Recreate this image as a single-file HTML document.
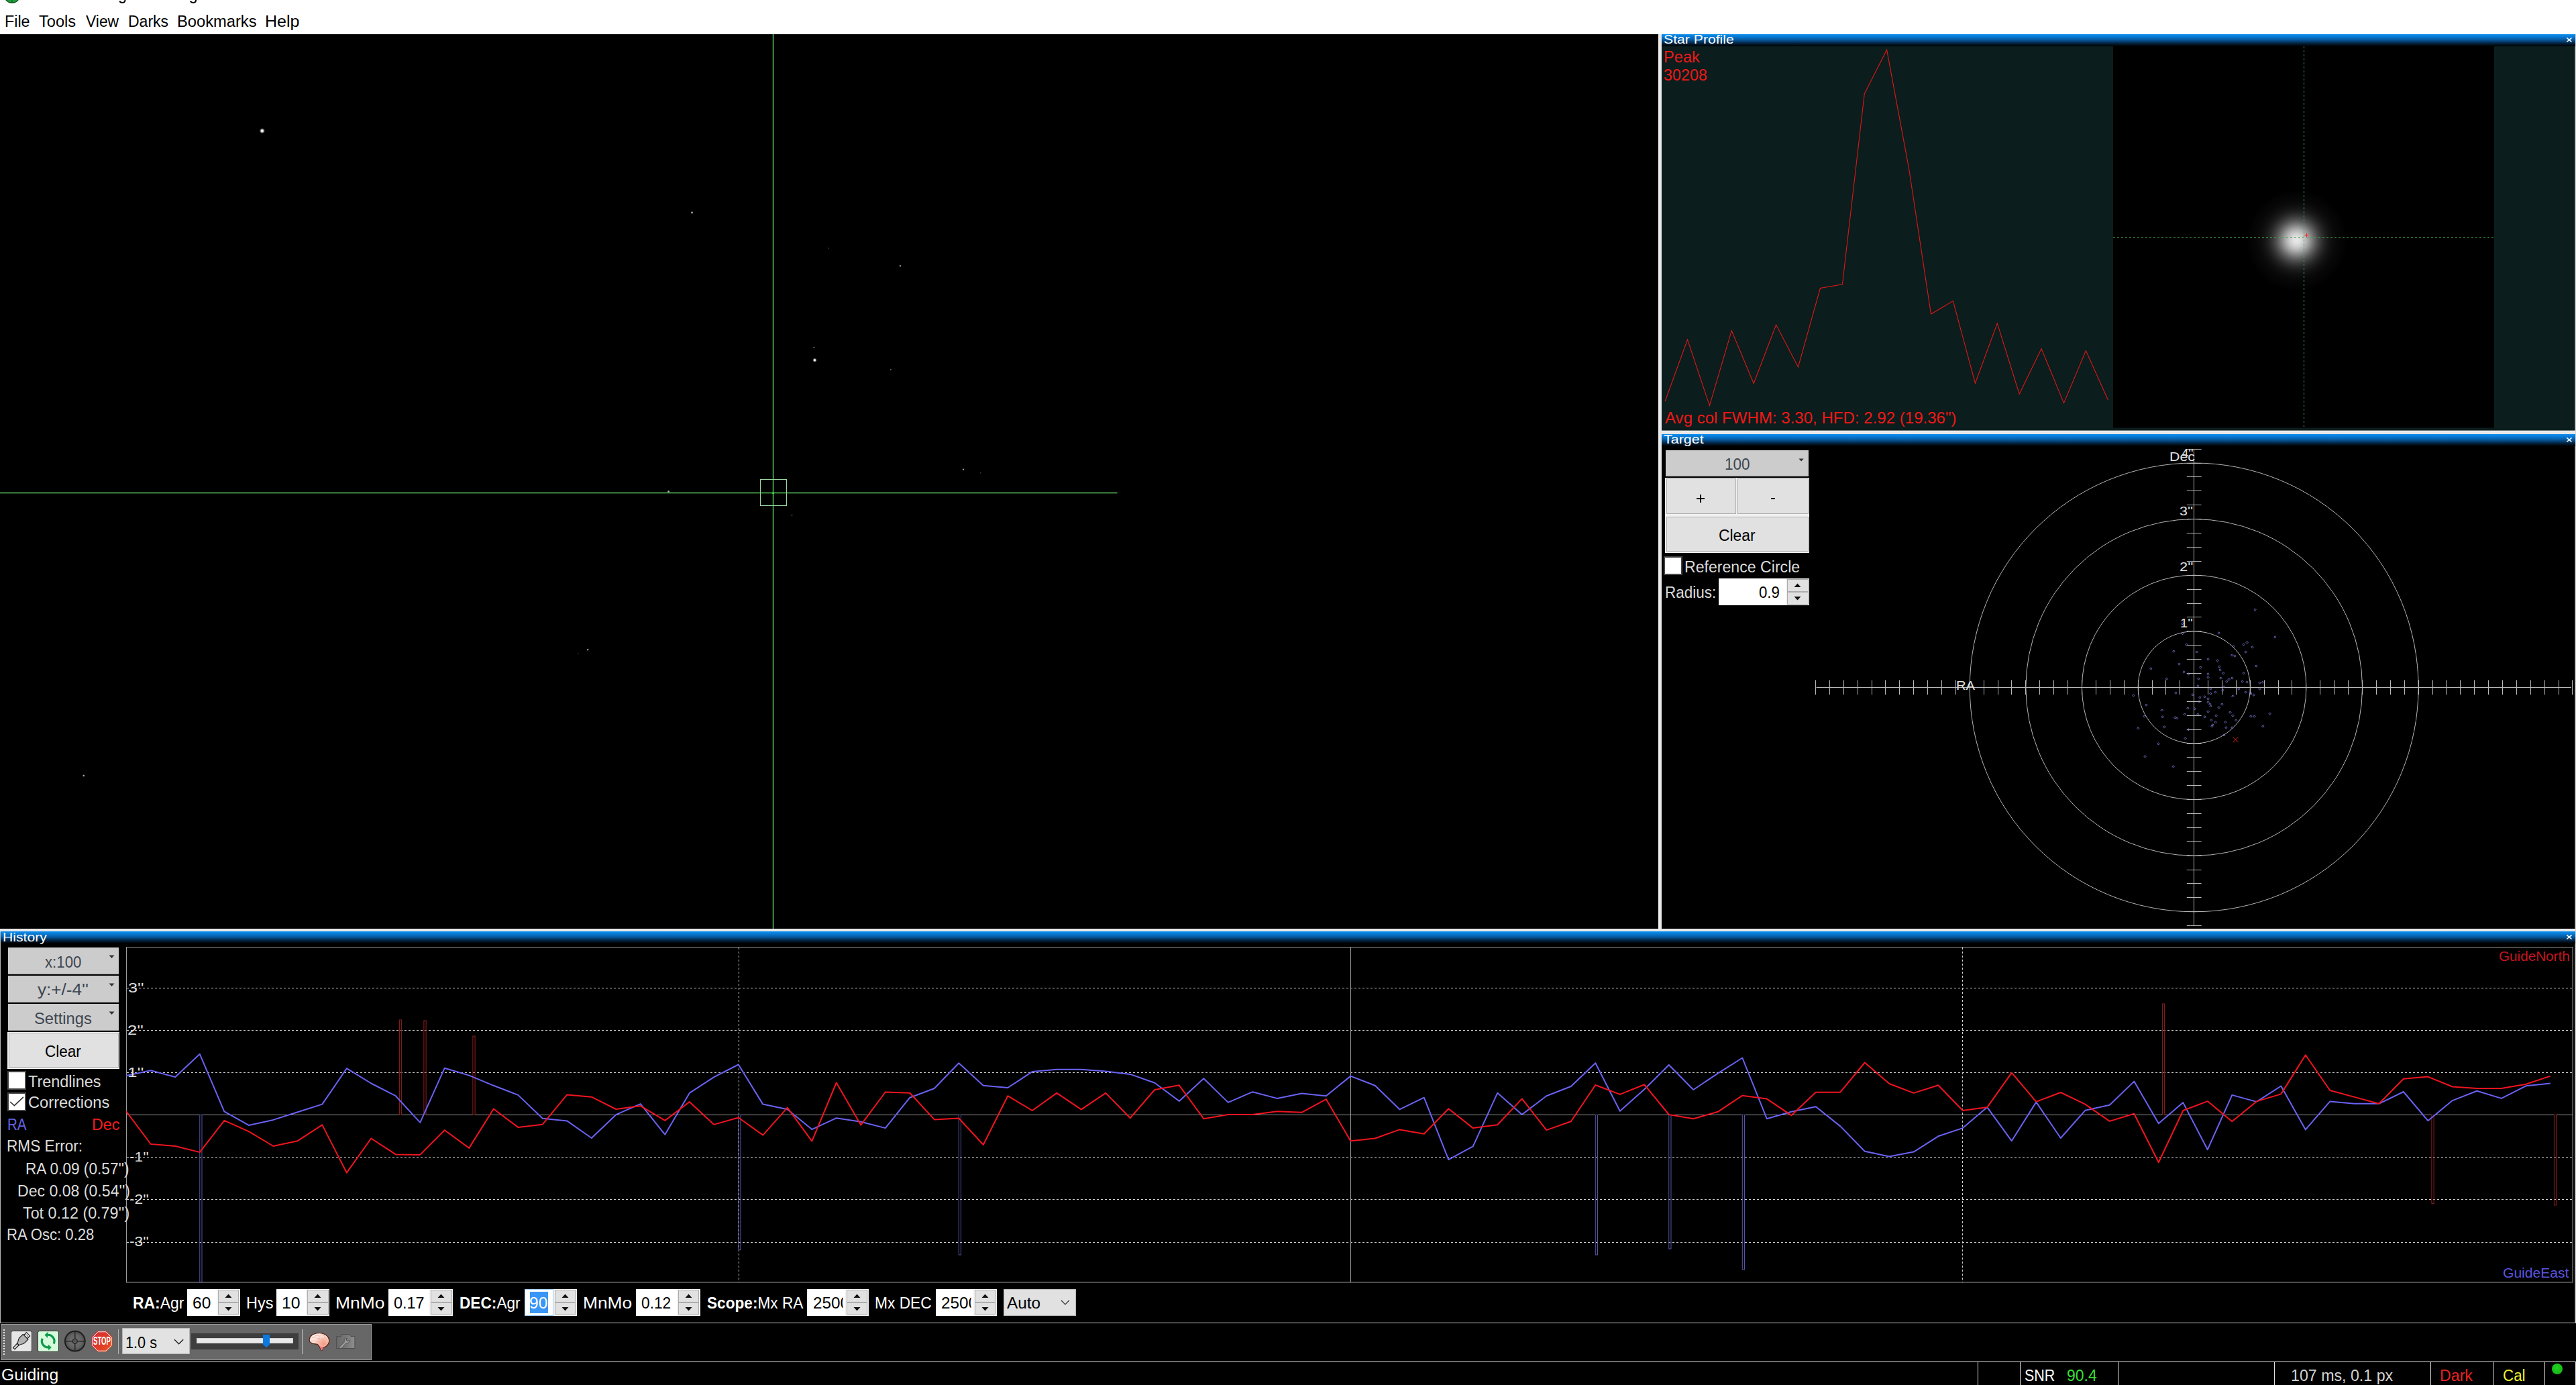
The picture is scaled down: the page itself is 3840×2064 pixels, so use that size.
<!DOCTYPE html>
<html><head><meta charset="utf-8"><title>PHD2 Guiding</title>
<style>
html,body{margin:0;padding:0;background:#fff;}
body{width:3840px;height:2064px;position:relative;overflow:hidden;font-family:"Liberation Sans",sans-serif;}
.a{position:absolute;}
.t{position:absolute;white-space:pre;line-height:1;transform-origin:0 0;}
.cap{position:absolute;height:18px;background:linear-gradient(#0a8ff0 0%,#0878d2 22%,#07569a 48%,#04294a 72%,#010a12 92%,#000 100%);}
.btn{position:absolute;background:#e1e1e1;border:1px solid #adadad;box-sizing:border-box;}
.lp{position:absolute;background:#f0f0f0;}
.dd{position:absolute;background:#cccccc;box-sizing:border-box;border-bottom:1px solid #a2a2a2;}
.sp{position:absolute;background:#fff;box-sizing:border-box;border:1px solid #7a7a7a;}
.sb{position:absolute;background:#e1e1e1;box-sizing:border-box;border:1px solid #adadad;}
.cb{position:absolute;background:#fff;box-sizing:border-box;border:2px solid #444;width:28px;height:28px;}
</style></head><body>

<svg class="a" style="left:0;top:0" width="320" height="8" viewBox="0 0 320 8"><circle cx="18" cy="-7.6" r="11.8" fill="#1fa03c" stroke="#0b4d1a" stroke-width="1.3"/><path d="M18 0v4" stroke="#0b4d1a" stroke-width="1"/><path d="M186.6 -1C186.6 3.4 184.4 3.9 182.6 3.9C180.6 3.9 179 3.2 178.3 1.6" stroke="#000" stroke-width="2" fill="none"/><path d="M292.2 -1C292.2 3.4 290 3.9 288.2 3.9C286.2 3.9 284.6 3.2 283.9 1.6" stroke="#000" stroke-width="2" fill="none"/></svg>
<div class="a" style="left:0;top:51px;width:2472px;height:1333px;background:#000"></div>
<svg class="a" style="left:0;top:0" width="3840" height="2064" viewBox="0 0 3840 2064">
<defs><radialGradient id="sg"><stop offset="0" stop-color="#fff" stop-opacity="1"/><stop offset="0.3" stop-color="#fff" stop-opacity="0.96"/><stop offset="0.55" stop-color="#fff" stop-opacity="0.55"/><stop offset="0.8" stop-color="#fff" stop-opacity="0.13"/><stop offset="1" stop-color="#fff" stop-opacity="0"/></radialGradient><radialGradient id="glow"><stop offset="0.000" stop-color="rgb(232,232,232)"/><stop offset="0.067" stop-color="rgb(225,225,225)"/><stop offset="0.133" stop-color="rgb(206,206,206)"/><stop offset="0.200" stop-color="rgb(179,179,179)"/><stop offset="0.267" stop-color="rgb(146,146,146)"/><stop offset="0.333" stop-color="rgb(113,113,113)"/><stop offset="0.400" stop-color="rgb(83,83,83)"/><stop offset="0.467" stop-color="rgb(59,59,59)"/><stop offset="0.533" stop-color="rgb(40,40,40)"/><stop offset="0.600" stop-color="rgb(26,26,26)"/><stop offset="0.667" stop-color="rgb(17,17,17)"/><stop offset="0.733" stop-color="rgb(11,11,11)"/><stop offset="0.800" stop-color="rgb(7,7,7)"/><stop offset="0.867" stop-color="rgb(5,5,5)"/><stop offset="0.933" stop-color="rgb(3,3,3)"/><stop offset="1.000" stop-color="rgb(0,0,0)"/></radialGradient></defs>
<circle cx="390.8" cy="195.0" r="4.42" fill="url(#sg)" opacity="1.0"/>
<circle cx="1031.5" cy="316.8" r="2.21" fill="url(#sg)" opacity="0.75"/>
<circle cx="1214.5" cy="536.7" r="3.38" fill="url(#sg)" opacity="1.0"/>
<circle cx="1213.4" cy="517.6" r="1.56" fill="url(#sg)" opacity="0.6"/>
<circle cx="1235.5" cy="370" r="1.30" fill="url(#sg)" opacity="0.3"/>
<circle cx="1342" cy="396.2" r="1.95" fill="url(#sg)" opacity="0.65"/>
<circle cx="1327.8" cy="550.8" r="1.69" fill="url(#sg)" opacity="0.4"/>
<circle cx="1436" cy="699.6" r="1.82" fill="url(#sg)" opacity="0.65"/>
<circle cx="1461.8" cy="704.8" r="1.30" fill="url(#sg)" opacity="0.25"/>
<circle cx="996.6" cy="732.5" r="2.21" fill="url(#sg)" opacity="0.75"/>
<circle cx="876.2" cy="968.2" r="1.95" fill="url(#sg)" opacity="0.7"/>
<circle cx="862" cy="974" r="1.30" fill="url(#sg)" opacity="0.2"/>
<circle cx="124.8" cy="1155.9" r="2.08" fill="url(#sg)" opacity="0.7"/>
<circle cx="1180.3" cy="768" r="2.60" fill="url(#sg)" opacity="0.12"/>
<rect x="1151.8" y="51" width="1.5" height="1333" fill="#56c45c"/>
<rect x="0" y="733.8" width="1665.5" height="1.5" fill="#56c45c"/>
<rect x="1133.5" y="714.5" width="39" height="39" fill="none" stroke="#9ad8a0" stroke-width="1"/>
<circle cx="1152.6" cy="734.8" r="1.6" fill="#2fe83c"/>
<rect x="2477" y="68" width="1361.6" height="573.6" fill="#0b1d1c"/>
<rect x="3150" y="69" width="568" height="568.5" fill="#000"/>
<circle cx="3423.5" cy="358" r="75" fill="url(#glow)"/>
<line x1="3434.5" y1="69" x2="3434.5" y2="637" stroke="#3fa64f" stroke-width="1" stroke-dasharray="3 3"/>
<line x1="3150" y1="353.5" x2="3718" y2="353.5" stroke="#3fa64f" stroke-width="1" stroke-dasharray="3 3"/>
<path d="M3435.5 350.3h6M3438.5 347.3v6" stroke="#ff2020" stroke-width="1"/>
<polyline fill="none" stroke="#e01818" stroke-width="1.1" points="2482.1,598.0 2515.5,506.1 2548.4,604.5 2581.3,492.7 2614.2,571.5 2647.6,484.0 2680.5,546.9 2713.4,429.5 2746.4,423.8 2779.3,139.7 2812.6,74.3 2845.6,251.4 2878.5,468.0 2911.4,448.5 2944.4,571.1 2977.3,481.9 3010.2,587.2 3043.1,519.6 3076.5,600.6 3109.4,522.6 3142.3,595.8"/>
<rect x="2477" y="664" width="1361.6" height="720" fill="#000"/>
<circle cx="3270.7" cy="1024.4" r="83.60" fill="none" stroke="#b4b4b4" stroke-width="1"/>
<circle cx="3270.7" cy="1024.4" r="167.20" fill="none" stroke="#b4b4b4" stroke-width="1"/>
<circle cx="3270.7" cy="1024.4" r="250.80" fill="none" stroke="#b4b4b4" stroke-width="1"/>
<circle cx="3270.7" cy="1024.4" r="334.40" fill="none" stroke="#b4b4b4" stroke-width="1"/>
<path d="M2707.5 1024.5H3833M3270.5 669V1380M2706.50 1013.5v21.8M2727.50 1013.5v21.8M2748.50 1013.5v21.8M2769.50 1013.5v21.8M2790.50 1013.5v21.8M2810.50 1013.5v21.8M2831.50 1013.5v21.8M2852.50 1013.5v21.8M2873.50 1013.5v21.8M2894.50 1013.5v21.8M2915.50 1013.5v21.8M2936.50 1013.5v21.8M2957.50 1013.5v21.8M2978.50 1013.5v21.8M2998.50 1013.5v21.8M3019.50 1013.5v21.8M3040.50 1013.5v21.8M3061.50 1013.5v21.8M3082.50 1013.5v21.8M3103.50 1013.5v21.8M3124.50 1013.5v21.8M3145.50 1013.5v21.8M3166.50 1013.5v21.8M3187.50 1013.5v21.8M3208.50 1013.5v21.8M3228.50 1013.5v21.8M3249.50 1013.5v21.8M3291.50 1013.5v21.8M3312.50 1013.5v21.8M3333.50 1013.5v21.8M3354.50 1013.5v21.8M3375.50 1013.5v21.8M3396.50 1013.5v21.8M3416.50 1013.5v21.8M3437.50 1013.5v21.8M3458.50 1013.5v21.8M3479.50 1013.5v21.8M3500.50 1013.5v21.8M3521.50 1013.5v21.8M3542.50 1013.5v21.8M3563.50 1013.5v21.8M3584.50 1013.5v21.8M3605.50 1013.5v21.8M3626.50 1013.5v21.8M3646.50 1013.5v21.8M3667.50 1013.5v21.8M3688.50 1013.5v21.8M3709.50 1013.5v21.8M3730.50 1013.5v21.8M3751.50 1013.5v21.8M3772.50 1013.5v21.8M3793.50 1013.5v21.8M3814.50 1013.5v21.8M3834.50 1013.5v21.8M3259.8 669.50h21.8M3259.8 690.50h21.8M3259.8 710.50h21.8M3259.8 731.50h21.8M3259.8 752.50h21.8M3259.8 773.50h21.8M3259.8 794.50h21.8M3259.8 815.50h21.8M3259.8 836.50h21.8M3259.8 857.50h21.8M3259.8 878.50h21.8M3259.8 899.50h21.8M3259.8 919.50h21.8M3259.8 940.50h21.8M3259.8 961.50h21.8M3259.8 982.50h21.8M3259.8 1003.50h21.8M3259.8 1045.50h21.8M3259.8 1066.50h21.8M3259.8 1087.50h21.8M3259.8 1108.50h21.8M3259.8 1128.50h21.8M3259.8 1149.50h21.8M3259.8 1170.50h21.8M3259.8 1191.50h21.8M3259.8 1212.50h21.8M3259.8 1233.50h21.8M3259.8 1254.50h21.8M3259.8 1275.50h21.8M3259.8 1296.50h21.8M3259.8 1316.50h21.8M3259.8 1337.50h21.8M3259.8 1358.50h21.8M3259.8 1379.50h21.8" stroke="#b8b8b8" stroke-width="1" fill="none"/>
<path d="M3361.5 907.0l1.6 1.6l-1.6 1.6l-1.6 -1.6zM3391.4 947.8l1.6 1.6l-1.6 1.6l-1.6 -1.6zM3307.5 941.8l1.6 1.6l-1.6 1.6l-1.6 -1.6zM3253.5 942.6l1.6 1.6l-1.6 1.6l-1.6 -1.6zM3253.1 927.8l1.6 1.6l-1.6 1.6l-1.6 -1.6zM3349.6 955.9l1.6 1.6l-1.6 1.6l-1.6 -1.6zM3344.5 959.0l1.6 1.6l-1.6 1.6l-1.6 -1.6zM3329.4 961.8l1.6 1.6l-1.6 1.6l-1.6 -1.6zM3357.5 962.8l1.6 1.6l-1.6 1.6l-1.6 -1.6zM3259.4 959.0l1.6 1.6l-1.6 1.6l-1.6 -1.6zM3240.4 968.9l1.6 1.6l-1.6 1.6l-1.6 -1.6zM3274.6 969.9l1.6 1.6l-1.6 1.6l-1.6 -1.6zM3347.5 969.9l1.6 1.6l-1.6 1.6l-1.6 -1.6zM3327.3 974.9l1.6 1.6l-1.6 1.6l-1.6 -1.6zM3331.4 976.0l1.6 1.6l-1.6 1.6l-1.6 -1.6zM3291.5 980.8l1.6 1.6l-1.6 1.6l-1.6 -1.6zM3305.5 982.8l1.6 1.6l-1.6 1.6l-1.6 -1.6zM3248.5 987.9l1.6 1.6l-1.6 1.6l-1.6 -1.6zM3308.3 991.9l1.6 1.6l-1.6 1.6l-1.6 -1.6zM3280.4 992.9l1.6 1.6l-1.6 1.6l-1.6 -1.6zM3206.4 994.8l1.6 1.6l-1.6 1.6l-1.6 -1.6zM3363.3 990.9l1.6 1.6l-1.6 1.6l-1.6 -1.6zM3309.5 996.8l1.6 1.6l-1.6 1.6l-1.6 -1.6zM3255.5 999.8l1.6 1.6l-1.6 1.6l-1.6 -1.6zM3262.4 1002.8l1.6 1.6l-1.6 1.6l-1.6 -1.6zM3291.5 1002.8l1.6 1.6l-1.6 1.6l-1.6 -1.6zM3314.4 1001.8l1.6 1.6l-1.6 1.6l-1.6 -1.6zM3344.5 1001.8l1.6 1.6l-1.6 1.6l-1.6 -1.6zM3291.5 1007.9l1.6 1.6l-1.6 1.6l-1.6 -1.6zM3229.7 1009.9l1.6 1.6l-1.6 1.6l-1.6 -1.6zM3277.4 1009.9l1.6 1.6l-1.6 1.6l-1.6 -1.6zM3310.3 1008.9l1.6 1.6l-1.6 1.6l-1.6 -1.6zM3322.5 1010.9l1.6 1.6l-1.6 1.6l-1.6 -1.6zM3327.3 1008.9l1.6 1.6l-1.6 1.6l-1.6 -1.6zM3319.4 1014.0l1.6 1.6l-1.6 1.6l-1.6 -1.6zM3342.5 1014.0l1.6 1.6l-1.6 1.6l-1.6 -1.6zM3349.6 1015.0l1.6 1.6l-1.6 1.6l-1.6 -1.6zM3368.4 1016.0l1.6 1.6l-1.6 1.6l-1.6 -1.6zM3372.8 1015.0l1.6 1.6l-1.6 1.6l-1.6 -1.6zM3276.4 1020.8l1.6 1.6l-1.6 1.6l-1.6 -1.6zM3315.4 1021.9l1.6 1.6l-1.6 1.6l-1.6 -1.6zM3295.4 1024.9l1.6 1.6l-1.6 1.6l-1.6 -1.6zM3337.4 1024.9l1.6 1.6l-1.6 1.6l-1.6 -1.6zM3368.4 1024.9l1.6 1.6l-1.6 1.6l-1.6 -1.6zM3313.4 1026.9l1.6 1.6l-1.6 1.6l-1.6 -1.6zM3302.5 1029.9l1.6 1.6l-1.6 1.6l-1.6 -1.6zM3295.4 1032.0l1.6 1.6l-1.6 1.6l-1.6 -1.6zM3347.5 1029.9l1.6 1.6l-1.6 1.6l-1.6 -1.6zM3354.4 1031.0l1.6 1.6l-1.6 1.6l-1.6 -1.6zM3355.4 1032.0l1.6 1.6l-1.6 1.6l-1.6 -1.6zM3359.5 1034.0l1.6 1.6l-1.6 1.6l-1.6 -1.6zM3243.4 1031.0l1.6 1.6l-1.6 1.6l-1.6 -1.6zM3268.5 1033.8l1.6 1.6l-1.6 1.6l-1.6 -1.6zM3180.3 1034.8l1.6 1.6l-1.6 1.6l-1.6 -1.6zM3328.3 1035.8l1.6 1.6l-1.6 1.6l-1.6 -1.6zM3279.4 1037.8l1.6 1.6l-1.6 1.6l-1.6 -1.6zM3286.5 1036.8l1.6 1.6l-1.6 1.6l-1.6 -1.6zM3291.5 1039.8l1.6 1.6l-1.6 1.6l-1.6 -1.6zM3278.4 1043.9l1.6 1.6l-1.6 1.6l-1.6 -1.6zM3291.5 1044.9l1.6 1.6l-1.6 1.6l-1.6 -1.6zM3294.4 1047.9l1.6 1.6l-1.6 1.6l-1.6 -1.6zM3295.4 1050.8l1.6 1.6l-1.6 1.6l-1.6 -1.6zM3312.4 1047.9l1.6 1.6l-1.6 1.6l-1.6 -1.6zM3307.5 1052.8l1.6 1.6l-1.6 1.6l-1.6 -1.6zM3199.5 1048.9l1.6 1.6l-1.6 1.6l-1.6 -1.6zM3261.4 1053.8l1.6 1.6l-1.6 1.6l-1.6 -1.6zM3271.5 1054.8l1.6 1.6l-1.6 1.6l-1.6 -1.6zM3222.6 1056.8l1.6 1.6l-1.6 1.6l-1.6 -1.6zM3291.5 1058.9l1.6 1.6l-1.6 1.6l-1.6 -1.6zM3324.5 1059.9l1.6 1.6l-1.6 1.6l-1.6 -1.6zM3256.6 1062.9l1.6 1.6l-1.6 1.6l-1.6 -1.6zM3276.4 1062.9l1.6 1.6l-1.6 1.6l-1.6 -1.6zM3303.5 1064.9l1.6 1.6l-1.6 1.6l-1.6 -1.6zM3328.3 1064.9l1.6 1.6l-1.6 1.6l-1.6 -1.6zM3286.5 1066.7l1.6 1.6l-1.6 1.6l-1.6 -1.6zM3223.6 1066.7l1.6 1.6l-1.6 1.6l-1.6 -1.6zM3242.4 1067.8l1.6 1.6l-1.6 1.6l-1.6 -1.6zM3245.4 1068.8l1.6 1.6l-1.6 1.6l-1.6 -1.6zM3196.5 1065.9l1.6 1.6l-1.6 1.6l-1.6 -1.6zM3355.4 1065.9l1.6 1.6l-1.6 1.6l-1.6 -1.6zM3360.5 1065.9l1.6 1.6l-1.6 1.6l-1.6 -1.6zM3383.5 1061.9l1.6 1.6l-1.6 1.6l-1.6 -1.6zM3296.4 1071.8l1.6 1.6l-1.6 1.6l-1.6 -1.6zM3333.4 1071.8l1.6 1.6l-1.6 1.6l-1.6 -1.6zM3302.5 1074.8l1.6 1.6l-1.6 1.6l-1.6 -1.6zM3317.4 1074.8l1.6 1.6l-1.6 1.6l-1.6 -1.6zM3298.4 1078.7l1.6 1.6l-1.6 1.6l-1.6 -1.6zM3297.4 1080.7l1.6 1.6l-1.6 1.6l-1.6 -1.6zM3373.4 1080.7l1.6 1.6l-1.6 1.6l-1.6 -1.6zM3226.4 1081.7l1.6 1.6l-1.6 1.6l-1.6 -1.6zM3318.4 1082.7l1.6 1.6l-1.6 1.6l-1.6 -1.6zM3327.3 1082.7l1.6 1.6l-1.6 1.6l-1.6 -1.6zM3187.4 1083.7l1.6 1.6l-1.6 1.6l-1.6 -1.6zM3262.4 1085.7l1.6 1.6l-1.6 1.6l-1.6 -1.6zM3315.4 1093.8l1.6 1.6l-1.6 1.6l-1.6 -1.6zM3257.6 1098.9l1.6 1.6l-1.6 1.6l-1.6 -1.6zM3217.5 1106.8l1.6 1.6l-1.6 1.6l-1.6 -1.6zM3197.5 1125.8l1.6 1.6l-1.6 1.6l-1.6 -1.6zM3239.6 1140.7l1.6 1.6l-1.6 1.6l-1.6 -1.6z" stroke="#8080e0" stroke-width="0.9" fill="none"/>
<path d="M3328.6 1098.3l8 8M3336.6 1098.3l-8 8" stroke="#e02020" stroke-width="1"/>
<rect x="0" y="1406" width="3838.6" height="565" fill="#000"/>
<rect x="188.5" y="1411.5" width="3646.5" height="499.5" fill="none" stroke="#9a9a9a" stroke-width="1"/>
<line x1="189" y1="1472.5" x2="3835" y2="1472.5" stroke="#d0d0d0" stroke-width="1" stroke-dasharray="3 3"/>
<line x1="189" y1="1535.5" x2="3835" y2="1535.5" stroke="#d0d0d0" stroke-width="1" stroke-dasharray="3 3"/>
<line x1="189" y1="1598.5" x2="3835" y2="1598.5" stroke="#d0d0d0" stroke-width="1" stroke-dasharray="3 3"/>
<line x1="189" y1="1724.5" x2="3835" y2="1724.5" stroke="#d0d0d0" stroke-width="1" stroke-dasharray="3 3"/>
<line x1="189" y1="1787.5" x2="3835" y2="1787.5" stroke="#d0d0d0" stroke-width="1" stroke-dasharray="3 3"/>
<line x1="189" y1="1851.5" x2="3835" y2="1851.5" stroke="#d0d0d0" stroke-width="1" stroke-dasharray="3 3"/>
<line x1="189" y1="1661.5" x2="3835" y2="1661.5" stroke="#9c9c9c" stroke-width="1"/>
<line x1="1101.5" y1="1412" x2="1101.5" y2="1911" stroke="#d0d0d0" stroke-width="1" stroke-dasharray="3 3"/>
<line x1="2013.5" y1="1412" x2="2013.5" y2="1911" stroke="#9c9c9c" stroke-width="1"/>
<line x1="2925.5" y1="1412" x2="2925.5" y2="1911" stroke="#d0d0d0" stroke-width="1" stroke-dasharray="3 3"/>
<rect x="297.8" y="1661.5" width="3.2" height="249.0" fill="none" stroke="#5656a8" stroke-width="1"/>
<rect x="1100.8" y="1661.5" width="3.2" height="201.0" fill="none" stroke="#5656a8" stroke-width="1"/>
<rect x="1429.3" y="1661.5" width="3.2" height="208.5" fill="none" stroke="#5656a8" stroke-width="1"/>
<rect x="2378.3" y="1661.5" width="3.2" height="208.5" fill="none" stroke="#5656a8" stroke-width="1"/>
<rect x="2487.8" y="1661.5" width="3.2" height="199.5" fill="none" stroke="#5656a8" stroke-width="1"/>
<rect x="2597.3" y="1661.5" width="3.2" height="230.5" fill="none" stroke="#5656a8" stroke-width="1"/>
<rect x="595.4" y="1520.0" width="3.2" height="141.5" fill="none" stroke="#8c2020" stroke-width="1"/>
<rect x="631.9" y="1521.0" width="3.2" height="140.5" fill="none" stroke="#8c2020" stroke-width="1"/>
<rect x="704.9" y="1544.0" width="3.2" height="117.5" fill="none" stroke="#8c2020" stroke-width="1"/>
<rect x="3223.4" y="1496.0" width="3.2" height="165.5" fill="none" stroke="#8c2020" stroke-width="1"/>
<rect x="3624.9" y="1661.5" width="3.2" height="131.9" fill="none" stroke="#8c2020" stroke-width="1"/>
<rect x="3807.4" y="1661.5" width="3.2" height="134.5" fill="none" stroke="#8c2020" stroke-width="1"/>
<polyline fill="none" stroke="#6a62f2" stroke-width="2" stroke-linejoin="round" points="188.3,1603.1 224.8,1595.2 261.3,1605.1 297.8,1570.8 334.3,1656.3 370.8,1676.9 407.3,1668.9 443.8,1657.3 480.3,1645.6 516.8,1592.2 553.3,1614.5 589.8,1633.2 626.3,1672.9 662.8,1591.7 699.3,1602.6 735.8,1617.8 772.3,1631.9 808.8,1666.7 845.3,1670.4 881.8,1696.0 918.3,1661.2 954.8,1645.1 991.3,1690.8 1027.8,1628.9 1064.3,1605.1 1100.8,1586.5 1137.3,1645.6 1173.8,1653.3 1210.3,1683.1 1246.8,1666.2 1283.3,1671.7 1319.8,1681.1 1356.3,1635.7 1392.8,1622.0 1429.3,1584.2 1465.8,1617.8 1502.3,1621.0 1538.8,1597.1 1575.3,1593.7 1611.8,1593.7 1648.3,1596.6 1684.8,1600.9 1721.3,1613.8 1757.8,1640.9 1794.3,1607.3 1830.8,1642.9 1867.3,1627.2 1903.8,1636.9 1940.3,1629.4 1976.8,1633.2 2013.3,1603.6 2049.8,1617.8 2086.3,1653.3 2122.8,1635.7 2159.3,1728.1 2195.8,1708.4 2232.3,1628.7 2268.8,1661.0 2305.3,1633.2 2341.8,1619.0 2378.3,1584.2 2414.8,1655.8 2451.3,1623.2 2487.8,1587.0 2524.3,1624.0 2560.8,1599.6 2597.3,1576.5 2633.8,1667.2 2670.3,1656.8 2706.8,1649.3 2743.3,1678.4 2779.8,1715.7 2816.3,1723.4 2852.8,1716.6 2889.3,1693.3 2925.8,1681.1 2962.3,1650.1 2998.8,1700.3 3035.3,1642.4 3071.8,1696.0 3108.3,1654.8 3144.8,1646.8 3181.3,1611.6 3217.8,1674.2 3254.3,1643.1 3290.8,1713.2 3327.3,1631.9 3363.8,1641.9 3400.3,1618.5 3436.8,1683.4 3473.3,1641.4 3509.8,1644.8 3546.3,1644.8 3582.8,1627.0 3619.3,1670.2 3655.8,1640.1 3692.3,1625.7 3728.8,1636.9 3765.3,1618.3 3801.8,1614.5"/>
<polyline fill="none" stroke="#f01420" stroke-width="2" stroke-linejoin="round" points="188.3,1656.3 224.8,1705.0 261.3,1708.0 297.8,1717.1 334.3,1669.9 370.8,1686.1 407.3,1708.0 443.8,1700.2 480.3,1676.4 516.8,1747.7 553.3,1696.5 589.8,1720.4 626.3,1720.9 662.8,1684.3 699.3,1710.9 735.8,1652.5 772.3,1679.9 808.8,1675.7 845.3,1631.4 881.8,1634.7 918.3,1653.0 954.8,1648.1 991.3,1669.9 1027.8,1642.1 1064.3,1675.9 1100.8,1665.5 1137.3,1691.6 1173.8,1650.6 1210.3,1700.7 1246.8,1613.5 1283.3,1676.6 1319.8,1627.5 1356.3,1628.7 1392.8,1668.4 1429.3,1666.5 1465.8,1706.0 1502.3,1633.2 1538.8,1655.0 1575.3,1628.9 1611.8,1653.3 1648.3,1628.9 1684.8,1666.2 1721.3,1624.0 1757.8,1617.3 1794.3,1667.2 1830.8,1661.0 1867.3,1661.0 1903.8,1656.3 1940.3,1657.8 1976.8,1638.1 2013.3,1700.3 2049.8,1696.5 2086.3,1683.4 2122.8,1689.8 2159.3,1652.3 2195.8,1681.1 2232.3,1676.2 2268.8,1637.4 2305.3,1684.1 2341.8,1671.2 2378.3,1617.0 2414.8,1630.9 2451.3,1616.3 2487.8,1661.0 2524.3,1667.2 2560.8,1656.8 2597.3,1632.7 2633.8,1637.6 2670.3,1662.2 2706.8,1627.7 2743.3,1627.7 2779.8,1583.5 2816.3,1615.0 2852.8,1628.9 2889.3,1617.3 2925.8,1655.0 2962.3,1650.1 2998.8,1598.6 3035.3,1641.9 3071.8,1628.0 3108.3,1645.6 3144.8,1670.9 3181.3,1659.8 3217.8,1732.3 3254.3,1655.0 3290.8,1641.1 3327.3,1671.2 3363.8,1641.4 3400.3,1630.4 3436.8,1572.3 3473.3,1625.0 3509.8,1634.9 3546.3,1644.8 3582.8,1607.8 3619.3,1604.6 3655.8,1619.5 3692.3,1622.0 3728.8,1622.0 3765.3,1615.8 3801.8,1603.6"/>
</svg>
<div class="a" style="left:2472px;top:51px;width:5px;height:1333px;background:linear-gradient(90deg,#f2f2f2,#e2e2e6)"></div>
<div class="a" style="left:2477px;top:641.6px;width:1363px;height:6px;background:linear-gradient(#ececec,#e4e2e2)"></div>
<div class="a" style="left:0;top:1383.6px;width:3840px;height:5.2px;background:linear-gradient(#eaeaea,#e2e2e4)"></div>
<div class="a" style="left:3838.6px;top:51px;width:1.4px;height:1921px;background:#d4d4d4"></div>
<div class="a" style="left:0;top:1388.5px;width:1px;height:583px;background:#b4b4b4"></div>
<div class="cap" style="left:2477px;top:51px;width:1361.6px;height:17.6px"></div>
<svg class="a" style="left:3825.2px;top:55px" width="10" height="9" viewBox="0 0 10 9"><path d="M1.3 1.3l7.2 6.2M8.5 1.3l-7.2 6.2" stroke="#fff" stroke-width="1.6" fill="none"/></svg>
<div class="cap" style="left:2477px;top:647.1px;width:1361.6px;height:17.6px"></div>
<svg class="a" style="left:3825.2px;top:651.4px" width="10" height="9" viewBox="0 0 10 9"><path d="M1.3 1.3l7.2 6.2M8.5 1.3l-7.2 6.2" stroke="#fff" stroke-width="1.6" fill="none"/></svg>
<div class="cap" style="left:1px;top:1388.3px;width:3837.6px;height:18px"></div>
<svg class="a" style="left:3825.4px;top:1392.2px" width="10" height="9" viewBox="0 0 10 9"><path d="M1.3 1.3l7.2 6.2M8.5 1.3l-7.2 6.2" stroke="#fff" stroke-width="1.6" fill="none"/></svg>
<div class="dd" style="left:2482.7px;top:670.7px;width:213.8px;height:39.6px"></div>
<svg class="a" style="left:2681.3px;top:682.6px" width="9" height="6"><path d="M0.4 0.4h7.4l-3.7 4.2z" fill="#333"/></svg>
<div class="lp" style="left:2482.3px;top:711.6px;width:214.7px;height:112.4px"></div>
<div class="btn" style="left:2483.6px;top:713.1px;width:104px;height:53.1px"></div>
<div class="btn" style="left:2590.3px;top:713.1px;width:105.5px;height:53.1px"></div>
<div class="btn" style="left:2483.6px;top:770px;width:212.2px;height:52.4px"></div>
<svg class="a" style="left:2527.5px;top:736px" width="14" height="14"><path d="M7 1v12M1 7h12" stroke="#000" stroke-width="1.9"/></svg>
<div class="a" style="left:2639.6px;top:742.3px;width:6.6px;height:1.5px;background:#111"></div>
<div class="cb" style="left:2480px;top:829px"></div>
<div class="a" style="left:2562.2px;top:862.2px;width:134.8px;height:39.7px;background:#f2f2f2"></div>
<div class="a" style="left:2562.2px;top:862.2px;width:100.2px;height:39.7px;background:#fff"></div>
<div class="sb" style="left:2664px;top:863.4px;width:31.8px;height:18.6px"></div>
<div class="sb" style="left:2664px;top:882.4px;width:31.8px;height:18.6px"></div>
<svg class="a" style="left:2674.4px;top:868.8px" width="11" height="26"><path d="M0.5 6l5-5.5l5 5.5zM0.5 20l5 5.5l5-5.5z" fill="#111"/></svg>
<div class="dd" style="left:11.6px;top:1411.9px;width:165.6px;height:39.9px"></div>
<svg class="a" style="left:161.5px;top:1422.9px" width="10" height="6"><path d="M0.5 0.5h8l-4 4.5z" fill="#333"/></svg>
<div class="dd" style="left:11.6px;top:1454.2px;width:165.6px;height:39.9px"></div>
<svg class="a" style="left:161.5px;top:1465.2px" width="10" height="6"><path d="M0.5 0.5h8l-4 4.5z" fill="#333"/></svg>
<div class="dd" style="left:11.6px;top:1496px;width:165.6px;height:39.9px"></div>
<svg class="a" style="left:161.5px;top:1507px" width="10" height="6"><path d="M0.5 0.5h8l-4 4.5z" fill="#333"/></svg>
<div class="lp" style="left:11.3px;top:1537.7px;width:166.8px;height:55px"></div><div class="btn" style="left:12.6px;top:1539px;width:164.2px;height:52.4px"></div>
<div class="cb" style="left:11px;top:1596px"></div>
<div class="cb" style="left:11px;top:1628px"></div>
<svg class="a" style="left:11px;top:1628px" width="28" height="28"><path d="M4.1 14l6.3 5.6l13.5-12.7" stroke="#333" stroke-width="1.6" fill="none"/></svg>
<div class="a" style="left:279.0px;top:1921px;width:78.9px;height:39.5px;background:#f2f2f2"></div>
<div class="a" style="left:279.0px;top:1921px;width:44.2px;height:39.5px;background:#fff;box-sizing:border-box;"></div>
<div class="sb" style="left:324.8px;top:1922.2px;width:31.6px;height:18.9px"></div>
<div class="sb" style="left:324.8px;top:1941.1px;width:31.6px;height:18.4px"></div>
<svg class="a" style="left:335.1px;top:1928px" width="11" height="26"><path d="M0.5 6l5-5.5l5 5.5zM0.5 20l5 5.5l5-5.5z" fill="#111"/></svg>
<div class="a" style="left:412.2px;top:1921px;width:78.9px;height:39.5px;background:#f2f2f2"></div>
<div class="a" style="left:412.2px;top:1921px;width:44.2px;height:39.5px;background:#fff;box-sizing:border-box;"></div>
<div class="sb" style="left:458.0px;top:1922.2px;width:31.6px;height:18.9px"></div>
<div class="sb" style="left:458.0px;top:1941.1px;width:31.6px;height:18.4px"></div>
<svg class="a" style="left:468.3px;top:1928px" width="11" height="26"><path d="M0.5 6l5-5.5l5 5.5zM0.5 20l5 5.5l5-5.5z" fill="#111"/></svg>
<div class="a" style="left:578.5px;top:1921px;width:96.6px;height:39.5px;background:#f2f2f2"></div>
<div class="a" style="left:578.5px;top:1921px;width:61.9px;height:39.5px;background:#fff;box-sizing:border-box;"></div>
<div class="sb" style="left:642.0px;top:1922.2px;width:31.6px;height:18.9px"></div>
<div class="sb" style="left:642.0px;top:1941.1px;width:31.6px;height:18.4px"></div>
<svg class="a" style="left:652.3px;top:1928px" width="11" height="26"><path d="M0.5 6l5-5.5l5 5.5zM0.5 20l5 5.5l5-5.5z" fill="#111"/></svg>
<div class="a" style="left:781.8px;top:1921px;width:77.8px;height:39.5px;background:#f2f2f2"></div>
<div class="a" style="left:781.8px;top:1921px;width:43.1px;height:39.5px;background:#fff;box-sizing:border-box;border:1.4px solid #9ccaf2;"></div>
<div class="sb" style="left:826.5px;top:1922.2px;width:31.6px;height:18.9px"></div>
<div class="sb" style="left:826.5px;top:1941.1px;width:31.6px;height:18.4px"></div>
<svg class="a" style="left:836.8px;top:1928px" width="11" height="26"><path d="M0.5 6l5-5.5l5 5.5zM0.5 20l5 5.5l5-5.5z" fill="#111"/></svg>
<div class="a" style="left:789.6px;top:1924.8px;width:27px;height:32.6px;background:#3a96f6"></div>
<div class="a" style="left:947.7px;top:1921px;width:95.9px;height:39.5px;background:#f2f2f2"></div>
<div class="a" style="left:947.7px;top:1921px;width:61.2px;height:39.5px;background:#fff;box-sizing:border-box;"></div>
<div class="sb" style="left:1010.5px;top:1922.2px;width:31.6px;height:18.9px"></div>
<div class="sb" style="left:1010.5px;top:1941.1px;width:31.6px;height:18.4px"></div>
<svg class="a" style="left:1020.8px;top:1928px" width="11" height="26"><path d="M0.5 6l5-5.5l5 5.5zM0.5 20l5 5.5l5-5.5z" fill="#111"/></svg>
<div class="a" style="left:1203.4px;top:1921px;width:91.4px;height:39.5px;background:#f2f2f2"></div>
<div class="a" style="left:1203.4px;top:1921px;width:56.7px;height:39.5px;background:#fff;box-sizing:border-box;"></div>
<div class="sb" style="left:1261.7px;top:1922.2px;width:31.6px;height:18.9px"></div>
<div class="sb" style="left:1261.7px;top:1941.1px;width:31.6px;height:18.4px"></div>
<svg class="a" style="left:1272.0px;top:1928px" width="11" height="26"><path d="M0.5 6l5-5.5l5 5.5zM0.5 20l5 5.5l5-5.5z" fill="#111"/></svg>
<div class="a" style="left:1394.5px;top:1921px;width:91.3px;height:39.5px;background:#f2f2f2"></div>
<div class="a" style="left:1394.5px;top:1921px;width:56.6px;height:39.5px;background:#fff;box-sizing:border-box;"></div>
<div class="sb" style="left:1452.7px;top:1922.2px;width:31.6px;height:18.9px"></div>
<div class="sb" style="left:1452.7px;top:1941.1px;width:31.6px;height:18.4px"></div>
<svg class="a" style="left:1463.0px;top:1928px" width="11" height="26"><path d="M0.5 6l5-5.5l5 5.5zM0.5 20l5 5.5l5-5.5z" fill="#111"/></svg>
<div class="btn" style="left:1496px;top:1921.2px;width:108px;height:39.5px;box-shadow:none;border-color:#b6b6b6"></div>
<svg class="a" style="left:1581.2px;top:1937.2px" width="14" height="9"><path d="M1 1l5.9 5.9l5.9-5.9" stroke="#333" stroke-width="1.3" fill="none"/></svg>
<div class="a" style="left:0;top:1971px;width:3839px;height:1.2px;background:#c8c8c8"></div>
<div class="a" style="left:0;top:1972.2px;width:3840px;height:57px;background:#000"></div>
<div class="a" style="left:0;top:2029px;width:3840px;height:1.2px;background:#e8e8e8"></div>
<div class="a" style="left:0;top:2030.2px;width:3840px;height:34px;background:#000"></div>
<div class="a" style="left:1px;top:1972.6px;width:553.4px;height:54px;background:#676767;border:1px solid #a0a0a0;box-sizing:border-box"></div>
<div class="a" style="left:5px;top:1981px;width:2px;height:38px;background:repeating-linear-gradient(#e8e8e8 0 2px,transparent 2px 4px)"></div>
<div class="a" style="left:16.2px;top:1983.2px;width:31.6px;height:31.4px;background:#e6e6e6;border:1px solid #2c2c2c;border-radius:3px;box-sizing:border-box"></div>
<svg class="a" style="left:16.3px;top:1983.3px" width="32" height="32" viewBox="0 0 32 32"><g transform="translate(15.3 16) rotate(45)" stroke="#222" stroke-width="1.2" stroke-linejoin="round"><rect x="-3.7" y="-15.2" width="7.4" height="5.6" fill="#fafafa"/><path d="M-3.7 -12.6h7.4" fill="none" stroke-width="0.9"/><path d="M-5.4 -9.6h10.8v7.2c0 4-3.4 5.4-3.6 8.8h-3.6c-0.2-3.4-3.6-4.8-3.6-8.8z" fill="#b2b2b2"/><rect x="-1.8" y="6.4" width="3.6" height="8.6" fill="#d2d2d2"/></g></svg>
<div class="a" style="left:56.3px;top:1983.2px;width:31.6px;height:31.4px;background:#d6fbdb;border:1px solid #2c2c2c;border-radius:3px;box-sizing:border-box"></div>
<svg class="a" style="left:56.4px;top:1983.3px" width="32" height="32" viewBox="0 0 32 32"><g fill="none" stroke="#0d9a4e" stroke-width="3.2"><path d="M14.1 6.4A9.3 9.3 0 0 1 24.1 19.5"/><path d="M17.3 24.8A9.3 9.3 0 0 1 7.3 11.7"/></g><path d="M10.4 6.4L15.5 1.8L15 11z" fill="#0d9a4e"/><path d="M20.8 25.1L15.7 20.5L16.3 29.6z" fill="#0d9a4e"/></svg>
<svg class="a" style="left:95px;top:1982px" width="34" height="34" viewBox="0 0 34 34"><defs><radialGradient id="cg" cx="0.5" cy="0.5" r="0.5"><stop offset="0" stop-color="#747474"/><stop offset="0.7" stop-color="#626262"/><stop offset="1" stop-color="#484848"/></radialGradient></defs><circle cx="16.8" cy="16.7" r="14.9" fill="url(#cg)" stroke="#1c1c1c" stroke-width="1.9"/><path d="M2.5 16.7h28.6M16.8 2.4v28.6" stroke="#262626" stroke-width="1.5"/><circle cx="16.8" cy="16.7" r="3.3" fill="#6a6a6a" stroke="#222" stroke-width="1.4"/><path d="M15.3 16.7h3M16.8 15.2v3" stroke="#333" stroke-width="0.8"/></svg>
<svg class="a" style="left:135.2px;top:1982px" width="34" height="34" viewBox="0 0 34 34"><defs><linearGradient id="rg" x1="0" y1="0" x2="1" y2="1"><stop offset="0" stop-color="#d42a34"/><stop offset="0.55" stop-color="#de3a2a"/><stop offset="1" stop-color="#ea5a1e"/></linearGradient></defs><polygon points="32.40,23.38 23.38,32.40 10.62,32.40 1.60,23.38 1.60,10.62 10.62,1.60 23.38,1.60 32.40,10.62" fill="url(#rg)"/><polygon points="31.20,22.88 22.88,31.20 11.12,31.20 2.80,22.88 2.80,11.12 11.12,2.80 22.88,2.80 31.20,11.12" fill="none" stroke="#fff" stroke-width="0.9"/><text x="17" y="21.2" font-family="Liberation Sans,sans-serif" font-weight="bold" font-size="13" fill="#fff" text-anchor="middle" textLength="26" lengthAdjust="spacingAndGlyphs" transform="translate(0 -6.6) scale(1 1.33)">STOP</text></svg>
<div class="a" style="left:176px;top:1980.6px;width:1.3px;height:37.4px;background:#b4b4b4"></div>
<div class="a" style="left:182px;top:1979px;width:101px;height:39.4px;background:#e2e2e2;border:1px solid #b4b4b4;box-sizing:border-box"></div>
<svg class="a" style="left:258.6px;top:1995px" width="16" height="10"><path d="M1 1.2l6.6 6.6l6.6-6.6" stroke="#222" stroke-width="1.4" fill="none"/></svg>
<div class="a" style="left:284.8px;top:1987px;width:160.6px;height:23.8px;background:#3e3e3e"></div>
<div class="a" style="left:292.7px;top:1993.8px;width:144.6px;height:8.6px;background:#e9e9e9;border:1px solid #d0d0d0;box-sizing:border-box"></div>
<svg class="a" style="left:391.6px;top:1988.6px" width="10" height="20"><path d="M0 0h10v14.6l-5 4.6l-5-4.6z" fill="#0a7ade"/></svg>
<div class="a" style="left:449.8px;top:1980.6px;width:1.3px;height:37.4px;background:#c4c4c4"></div>
<svg class="a" style="left:460px;top:1985.6px" width="32" height="28" viewBox="0 0 32 28"><defs><radialGradient id="bg1" cx="0.72" cy="0.62" r="0.5"><stop offset="0" stop-color="#f39a7e"/><stop offset="0.5" stop-color="#f7bcaa"/><stop offset="1" stop-color="#fce4dc"/></radialGradient></defs><path d="M1.2 10.1C1.6 7.6 2.4 6 3.7 5C5 3.4 6.5 2.5 8.3 2C10.5 1.1 12.8 0.75 15.3 0.75C18 0.7 20.6 1.1 22.9 2C25 2.8 26.8 4 28 5.5C29.6 7 30.6 9 30.7 11.1C30.9 12.8 30.6 14.3 30 15.6C29.3 17.3 28.3 18.7 27 19.7C25.9 20.6 24.7 21.3 23.4 21.7L20.9 23.2L20.4 26.2L18.4 26C17.6 23.6 16.6 21.4 15.3 19.7C14.6 18.6 13.8 17.7 12.8 17.2C11.4 16.8 9.8 16.9 8.3 16.7C6.5 16.5 4.9 16 3.7 15.1C2.7 14.5 1.9 13.7 1.5 12.6C1.2 11.8 1.1 11 1.2 10.1Z" fill="url(#bg1)" stroke="#5c1c12" stroke-width="1.2" stroke-linejoin="round"/><path d="M16 19.5c2 1.4 4.6 1.6 7 1.2l-2 2.3l-0.5 3l-2-0.2c-0.6-2.4-1.4-4.6-2.5-6.3z" fill="#ee7e84"/><path d="M5 8c2-2.400 4.500-2 5.500 0M10 4.500c2.500-1.500 5.500-1 6.500 1M17 3.500c3-1 6 0 7 2M23 7c2.500 0 4.500 2 4.500 4.500M4 12c2.500 1 4.500 0 5.500-2M10.500 13c2.500 2 5.500 1 7-1M18 9c1.500 2 4 2.500 6 1M19 15c2 1.500 5 1.500 7-0.500M12 8.500c1.500 1 3.500 1 5-0.500" fill="none" stroke="#f0a898" stroke-width="0.9"/><path d="M4.500 6.500c1.500-1.800 3.500-2.600 5.500-2.400M12 2.800c2-0.800 4.500-0.900 6.500-0.400M6 10.500c1.200-0.800 2.600-0.800 3.600 0" fill="none" stroke="#fff6f2" stroke-width="1"/></svg>
<svg class="a" style="left:500.8px;top:1987.8px" width="29" height="23" viewBox="0 0 29 23"><defs><linearGradient id="cam" x1="0" y1="0" x2="1" y2="0"><stop offset="0" stop-color="#6a6a6a"/><stop offset="0.45" stop-color="#747474"/><stop offset="1" stop-color="#8e8e8e"/></linearGradient></defs><path d="M0.7 3.600h6l2-3.100h11.200l2 3.100h6v17.900h-27.200z" fill="url(#cam)" stroke="#4e4e4e" stroke-width="1" stroke-linejoin="round"/><path d="M3.200 21.300l9.200-9.400c-1.100-2.700 0.700-5.600 3.800-5.500l-1.300 2.700l2.500 1.900l2.600-1.700c0.500 3-2.300 5.300-5.100 4.300l-6.600 7.700z" fill="#9c9c9c" stroke="#4a4a4a" stroke-width="0.9" stroke-linejoin="round"/></svg>
<div class="a" style="left:2947.9px;top:2030px;width:1.3px;height:34px;background:#e0e0e0"></div>
<div class="a" style="left:3011.1px;top:2030px;width:1.3px;height:34px;background:#e0e0e0"></div>
<div class="a" style="left:3157.0px;top:2030px;width:1.3px;height:34px;background:#e0e0e0"></div>
<div class="a" style="left:3390.2000000000003px;top:2030px;width:1.3px;height:34px;background:#e0e0e0"></div>
<div class="a" style="left:3623.0px;top:2030px;width:1.3px;height:34px;background:#e0e0e0"></div>
<div class="a" style="left:3715.8px;top:2030px;width:1.3px;height:34px;background:#e0e0e0"></div>
<div class="a" style="left:3792.9px;top:2030px;width:1.3px;height:34px;background:#e0e0e0"></div>
<div class="a" style="left:3838.6px;top:2030px;width:1.3px;height:34px;background:#e0e0e0"></div>
<div class="a" style="left:3803.8px;top:2031.7px;width:16.4px;height:16.4px;border-radius:50%;background:radial-gradient(circle at 45% 40%,#22d022,#10b410)"></div>
<div class="t" id="m0" style="left:6.58px;top:21.28px;font-size:23.3px;color:#000;transform:scaleX(1.0006);">File</div>
<div class="t" id="m1" style="left:57.63px;top:21.28px;font-size:23.3px;color:#000;transform:scaleX(1.0131);">Tools</div>
<div class="t" id="m2" style="left:127.60px;top:21.28px;font-size:23.3px;color:#000;transform:scaleX(0.9808);">View</div>
<div class="t" id="m3" style="left:191.20px;top:21.28px;font-size:23.3px;color:#000;transform:scaleX(0.9881);">Darks</div>
<div class="t" id="m4" style="left:263.65px;top:21.28px;font-size:23.3px;color:#000;transform:scaleX(1.0177);">Bookmarks</div>
<div class="t" id="m5" style="left:395.04px;top:21.28px;font-size:23.3px;color:#000;transform:scaleX(1.0763);">Help</div>
<div class="t" id="c1" style="left:2480.24px;top:50.49px;font-size:18.8px;color:#fff;transform:scaleX(1.1283);">Star Profile</div>
<div class="t" id="c2" style="left:2479.96px;top:646.49px;font-size:18.8px;color:#fff;transform:scaleX(1.1438);">Target</div>
<div class="t" id="c3" style="left:3.65px;top:1387.59px;font-size:18.8px;color:#fff;transform:scaleX(1.1258);">History</div>
<div class="t" id="p1" style="left:2479.95px;top:74.16px;font-size:23.2px;color:#f01818;transform:scaleX(1.0189);">Peak</div>
<div class="t" id="p2" style="left:2480.27px;top:100.56px;font-size:23.2px;color:#f01818;transform:scaleX(1.0072);">30208</div>
<div class="t" id="p3" style="left:2481.80px;top:612.06px;font-size:23.2px;color:#f01818;transform:scaleX(1.0373);">Avg col FWHM: 3.30, HFD: 2.92 (19.36&quot;)</div>
<div class="t" id="t100" style="left:2570.99px;top:681.48px;font-size:23.3px;color:#3e4650;transform:scaleX(0.9691);">100</div>
<div class="t" id="tclear" style="left:2561.53px;top:786.88px;font-size:23.3px;color:#000;transform:scaleX(0.9785);">Clear</div>
<div class="t" id="tref" style="left:2511.19px;top:833.68px;font-size:23.3px;color:#dcdcdc;transform:scaleX(0.9921);">Reference Circle</div>
<div class="t" id="trad" style="left:2481.84px;top:871.58px;font-size:23.3px;color:#dcdcdc;transform:scaleX(0.9643);">Radius:</div>
<div class="t" id="t09" style="left:2622.31px;top:871.58px;font-size:23.3px;color:#000;transform:scaleX(0.9538);">0.9</div>
<div class="t" id="ldec" style="left:3234.33px;top:670.82px;font-size:19px;color:#e0e0e0;transform:scaleX(1.1248);">Dec</div>
<div class="t" id="l4" style="left:3252.11px;top:665.82px;font-size:19px;color:#e0e0e0;transform:scaleX(0.9777);">4''</div>
<div class="t" id="l3" style="left:3249.13px;top:751.62px;font-size:19px;color:#e0e0e0;transform:scaleX(1.1307);">3''</div>
<div class="t" id="l2" style="left:3248.77px;top:835.42px;font-size:19px;color:#e0e0e0;transform:scaleX(1.1518);">2''</div>
<div class="t" id="l1" style="left:3250.24px;top:919.42px;font-size:19px;color:#e0e0e0;transform:scaleX(1.0651);">1''</div>
<div class="t" id="lra" style="left:2916.42px;top:1012.02px;font-size:19px;color:#e0e0e0;transform:scaleX(1.0639);">RA</div>
<div class="t" id="hx" style="left:67.20px;top:1422.68px;font-size:23.3px;color:#3e4650;transform:scaleX(0.9536);">x:100</div>
<div class="t" id="hy" style="left:56.30px;top:1464.48px;font-size:23.3px;color:#3e4650;transform:scaleX(1.1208);">y:+/-4''</div>
<div class="t" id="hs" style="left:50.86px;top:1506.58px;font-size:23.3px;color:#3e4650;transform:scaleX(1.0201);">Settings</div>
<div class="t" id="hclear" style="left:66.94px;top:1555.88px;font-size:23.3px;color:#000;transform:scaleX(0.9675);">Clear</div>
<div class="t" id="htr" style="left:42.43px;top:1600.58px;font-size:23.3px;color:#dcdcdc;transform:scaleX(1.0053);">Trendlines</div>
<div class="t" id="hco" style="left:41.69px;top:1632.38px;font-size:23.3px;color:#dcdcdc;transform:scaleX(1.0178);">Corrections</div>
<div class="t" id="hra" style="left:10.90px;top:1664.58px;font-size:23.3px;color:#6464e6;transform:scaleX(0.8806);">RA</div>
<div class="t" id="hdec" style="left:136.68px;top:1664.58px;font-size:23.3px;color:#f41c1c;transform:scaleX(1.0013);">Dec</div>
<div class="t" id="hrms" style="left:10.23px;top:1697.48px;font-size:23.3px;color:#dcdcdc;transform:scaleX(0.9709);">RMS Error:</div>
<div class="t" id="hr1" style="left:37.53px;top:1730.98px;font-size:23.3px;color:#dcdcdc;transform:scaleX(0.9720);">RA 0.09 (0.57'')</div>
<div class="t" id="hr2" style="left:25.50px;top:1763.98px;font-size:23.3px;color:#dcdcdc;transform:scaleX(0.9912);">Dec 0.08 (0.54'')</div>
<div class="t" id="hr3" style="left:34.34px;top:1796.78px;font-size:23.3px;color:#dcdcdc;transform:scaleX(1.0002);">Tot 0.12 (0.79'')</div>
<div class="t" id="hosc" style="left:10.27px;top:1829.08px;font-size:23.3px;color:#dcdcdc;transform:scaleX(0.9500);">RA Osc: 0.28</div>
<div class="t" id="g3" style="left:190.72px;top:1462.88px;font-size:19.5px;color:#dedede;transform:scaleX(1.2874);">3''</div>
<div class="t" id="g2" style="left:190.30px;top:1525.95px;font-size:19.5px;color:#dedede;transform:scaleX(1.3113);">2''</div>
<div class="t" id="g1" style="left:189.87px;top:1589.02px;font-size:19.5px;color:#dedede;transform:scaleX(1.3361);">1''</div>
<div class="t" id="gm1" style="left:192.99px;top:1715.16px;font-size:19.5px;color:#dedede;transform:scaleX(1.1641);">-1''</div>
<div class="t" id="gm2" style="left:192.99px;top:1778.23px;font-size:19.5px;color:#dedede;transform:scaleX(1.1641);">-2''</div>
<div class="t" id="gm3" style="left:192.99px;top:1841.30px;font-size:19.5px;color:#dedede;transform:scaleX(1.1641);">-3''</div>
<div class="t" id="gn" style="left:3724.83px;top:1415.25px;font-size:20.5px;color:#c81420;transform:scaleX(1.0086);">GuideNorth</div>
<div class="t" id="ge" style="left:3731.31px;top:1886.95px;font-size:20.5px;color:#5c54e0;transform:scaleX(1.0281);">GuideEast</div>
<div class="t" id="b1" style="left:197.57px;top:1930.78px;font-size:23.3px;color:#fff;transform:scaleX(0.9842);"><b>RA:</b>Agr</div>
<div class="t" id="b2" style="left:366.97px;top:1930.78px;font-size:23.3px;color:#fff;transform:scaleX(1.0059);">Hys</div>
<div class="t" id="b3" style="left:499.94px;top:1930.78px;font-size:23.3px;color:#fff;transform:scaleX(1.1328);">MnMo</div>
<div class="t" id="b4" style="left:684.68px;top:1930.78px;font-size:23.3px;color:#fff;transform:scaleX(0.9723);"><b>DEC:</b>Agr</div>
<div class="t" id="b5" style="left:868.64px;top:1930.78px;font-size:23.3px;color:#fff;transform:scaleX(1.1312);">MnMo</div>
<div class="t" id="b6" style="left:1054.05px;top:1930.78px;font-size:23.3px;color:#fff;transform:scaleX(0.9720);"><b>Scope:</b>Mx RA</div>
<div class="t" id="b7" style="left:1304.02px;top:1930.78px;font-size:23.3px;color:#fff;transform:scaleX(0.9774);">Mx DEC</div>
<div class="t" id="s1" style="left:287.05px;top:1930.78px;font-size:23.3px;color:#000;transform:scaleX(1.0518);">60</div>
<div class="t" id="s2" style="left:419.75px;top:1930.78px;font-size:23.3px;color:#000;transform:scaleX(1.0636);">10</div>
<div class="t" id="s3" style="left:586.67px;top:1930.78px;font-size:23.3px;color:#000;transform:scaleX(1.0051);">0.17</div>
<div class="t" id="s4" style="left:789.35px;top:1930.78px;font-size:23.3px;color:#fff;transform:scaleX(1.0518);">90</div>
<div class="t" id="s5" style="left:955.99px;top:1930.78px;font-size:23.3px;color:#000;transform:scaleX(0.9754);">0.12</div>
<div class="t" id="s6" style="left:1212.26px;top:1930.78px;font-size:23.3px;color:#000;transform:scaleX(1.0406);clip-path:inset(0 8.9px 0 0);">2500</div>
<div class="t" id="s7" style="left:1403.36px;top:1930.78px;font-size:23.3px;color:#000;transform:scaleX(1.0406);clip-path:inset(0 9.0px 0 0);">2500</div>
<div class="t" id="bauto" style="left:1500.60px;top:1930.78px;font-size:23.3px;color:#000;transform:scaleX(1.0450);">Auto</div>
<div class="t" id="tb1" style="left:186.64px;top:1989.98px;font-size:23.3px;color:#000;transform:scaleX(0.9311);">1.0 s</div>
<div class="t" id="st0" style="left:2.24px;top:2037.88px;font-size:23.3px;color:#fff;transform:scaleX(1.0602);">Guiding</div>
<div class="t" id="st1" style="left:3017.93px;top:2039.18px;font-size:23.3px;color:#fff;transform:scaleX(0.9190);">SNR</div>
<div class="t" id="st2" style="left:3081.42px;top:2039.18px;font-size:23.3px;color:#38e038;transform:scaleX(0.9845);">90.4</div>
<div class="t" id="st3" style="left:3414.85px;top:2039.18px;font-size:23.3px;color:#d4d4d4;transform:scaleX(0.9956);">107 ms, 0.1 px</div>
<div class="t" id="st4" style="left:3637.09px;top:2039.18px;font-size:23.3px;color:#e82222;transform:scaleX(0.9950);">Dark</div>
<div class="t" id="st5" style="left:3730.95px;top:2039.18px;font-size:23.3px;color:#f0f032;transform:scaleX(0.9588);">Cal</div>
</body></html>
